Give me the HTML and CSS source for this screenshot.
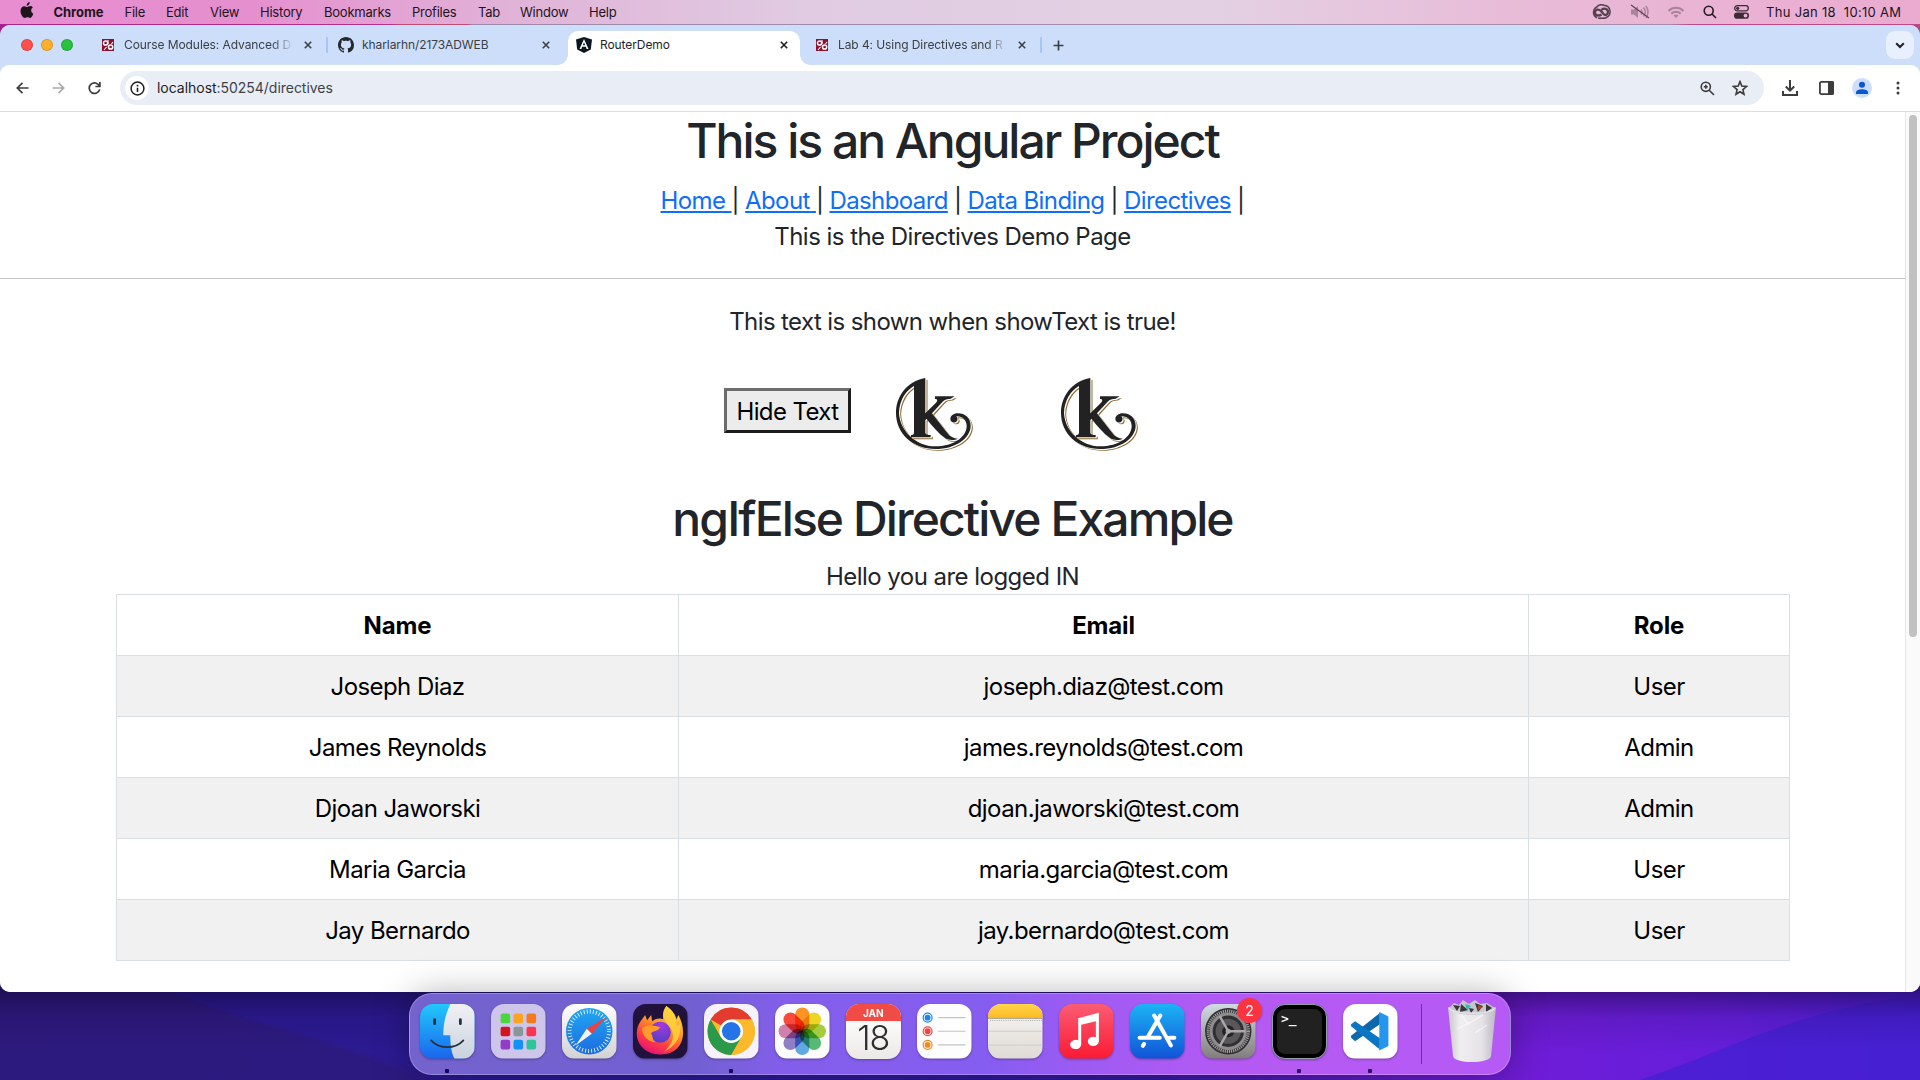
FILE: index.html
```html
<!DOCTYPE html>
<html lang="en">
<head>
<meta charset="utf-8">
<title>RouterDemo</title>
<link rel="stylesheet" href="styles.css">
</head>
<body>
<svg class="defs" aria-hidden="true">
  <defs>
    <g id="klogo">
      <path d="M88 0C32 10 0 55 0 105c0 62 50 108 118 108 62 0 106-34 106-70 0-23-17-37-38-37-14 0-23 8-23 17a11 11 0 0 0 21 4c2-6-1-9-3-12 18-1 31 12 31 29 0 32-38 61-94 61C60 205 12 160 9 105 10 68 29 38 54 24v140c0 5-4 7-9 7v7h59v-7c-9 0-16-2-16-7v-38l4-3c16 20 35 43 56 58 11 7 28 6 38 1-14-1-24-6-32-17l-46-59 32-35c7-7 13-9 24-9l12-7h-59v8c9 0 8 6 3 11l-32 32z"/>
    </g>
    <g id="bbmark">
      <path d="M0 0h12v12H0z" fill="#8d1231"/>
      <circle cx="3.6" cy="4" r="2.1" fill="none" stroke="#fff" stroke-width="1.500"/>
      <circle cx="8.6" cy="8" r="2.1" fill="none" stroke="#fff" stroke-width="1.500"/>
      <path d="M6 1v4M2 11l2.500-3M9.500 5l1.500-2" stroke="#fff" stroke-width="1.100"/>
    </g>
    <linearGradient id="gFinder" x2="0" y2="1"><stop stop-color="#22c8fb"/><stop offset="1" stop-color="#1a66ee"/></linearGradient>
    <linearGradient id="gFace" x2="0" y2="1"><stop stop-color="#f1f1f4"/><stop offset="1" stop-color="#c8d3df"/></linearGradient>
    <linearGradient id="gSafari" x2="0" y2="1"><stop stop-color="#22a7f2"/><stop offset="1" stop-color="#1b6be0"/></linearGradient>
    <linearGradient id="gWhite" x2="0" y2="1"><stop stop-color="#fff"/><stop offset="1" stop-color="#d2d2d4"/></linearGradient>
    <linearGradient id="gFox" x1=".8" y1="0" x2=".3" y2="1"><stop stop-color="#ffe14a"/><stop offset=".45" stop-color="#ff9028"/><stop offset=".75" stop-color="#ff3a42"/><stop offset="1" stop-color="#e0117e"/></linearGradient>
    <radialGradient id="gGlobe" cx=".55" cy=".2" r=".9"><stop stop-color="#a23ae0"/><stop offset="1" stop-color="#4a3fc0"/></radialGradient>
    <linearGradient id="gMusic" x2="0" y2="1"><stop stop-color="#fb5c74"/><stop offset="1" stop-color="#fa1b33"/></linearGradient>
    <linearGradient id="gStore" x2="0" y2="1"><stop stop-color="#1bb4f5"/><stop offset="1" stop-color="#1153d6"/></linearGradient>
    <linearGradient id="gGray" x2="0" y2="1"><stop stop-color="#cfdbe2"/><stop offset="1" stop-color="#827d7c"/></linearGradient>
    <linearGradient id="gNote" x2="0" y2="1"><stop stop-color="#f7f6f4"/><stop offset="1" stop-color="#dfdad5"/></linearGradient>
    <linearGradient id="gYellow" x2="0" y2="1"><stop stop-color="#ffd54a"/><stop offset="1" stop-color="#fdb924"/></linearGradient>
    <linearGradient id="gTrash"><stop stop-color="#c9c6cc"/><stop offset=".25" stop-color="#efeef0"/><stop offset=".7" stop-color="#e6e3e8"/><stop offset="1" stop-color="#bdb8c4"/></linearGradient>
    <linearGradient id="gWall"><stop stop-color="#2e1b83"/><stop offset=".3" stop-color="#2d1a8c"/><stop offset=".6" stop-color="#3c1ba6"/><stop offset=".78" stop-color="#701cd6"/><stop offset=".9" stop-color="#651edb"/><stop offset="1" stop-color="#4d1ed6"/></linearGradient>
    <linearGradient id="gShade" x2="0" y2="1"><stop stop-color="#10042e" stop-opacity=".6"/><stop offset=".5" stop-color="#10042e" stop-opacity=".12"/><stop offset="1" stop-color="#10042e" stop-opacity="0"/></linearGradient>
  </defs>
</svg>

<header class="menubar">
  <svg class="apple" width="14" height="17" viewBox="0 0 14 17"><path fill="#1e141c" d="M9.7 0c.1 1.200-.3 2.100-.9 2.800-.6.7-1.400 1.100-2.200 1.100-.1-1.100.4-2.100.9-2.700C8.100.5 9 .1 9.700 0zM12.900 5.600c-1.200.8-1.700 1.700-1.700 3 0 1.500.8 2.600 2.100 3.100-.4 1.300-1.700 4.200-3.300 4.200-.9 0-1.300-.6-2.500-.6s-1.600.6-2.500.6C3 15.900.5 12.400.5 8.900c0-3.100 1.900-4.700 3.800-4.700 1.200 0 2.100.8 2.900.8.800 0 1.800-.9 3.200-.9 1.100 0 2 .6 2.500 1.500z"/></svg>
  <nav class="menus">
    <b>Chrome</b><span>File</span><span>Edit</span><span>View</span><span>History</span><span>Bookmarks</span><span>Profiles</span><span>Tab</span><span>Window</span><span>Help</span>
  </nav>
  <div class="status">
    <svg width="20" height="16" viewBox="0 0 20 16" fill="none" stroke="#55414d" stroke-width="1.500"><path d="M6 13.800A6 6 0 0 1 5.500 3.200 6.800 6.800 0 0 1 13 1.200a6.500 6.500 0 0 1 2 12.500 8 8 0 0 1-3 .5H7"/><path d="M10.500 10.500C8.500 12 4 12 4 8.500S8 5 10 7l2.500 3c2 2 4.500.5 4.500-2 0-3-4-4.500-6.500-2.200" stroke-width="2.300"/></svg>
    <svg width="20" height="16" viewBox="0 0 20 16" fill="none" stroke="#a88399" stroke-width="1.500"><path d="M1 5.500h3L8 2v12L4 10.500H1z" fill="#a88399" stroke="none"/><path d="M11 5.500q2 2.500 0 5M13.500 3.500q3.500 4.500 0 9M16 2q4 6 0 12"/><path d="M1 1l18 13" stroke="#5c4353" stroke-width="1.200"/></svg>
    <svg width="18" height="13" viewBox="0 0 18 13" fill="none" stroke="#a88399" stroke-width="2"><path d="M1.500 5a10.500 10.500 0 0 1 15 0M4.300 7.800a6.500 6.500 0 0 1 9.400 0"/><path d="M9 12L6.500 9.600a3.600 3.600 0 0 1 5 0z" fill="#a88399" stroke="none"/></svg>
    <svg width="14" height="14" viewBox="0 0 14 14" fill="none" stroke="#231a20" stroke-width="1.600"><circle cx="5.700" cy="5.700" r="4.500"/><path d="M9 9l4 4"/></svg>
    <svg width="15" height="14" viewBox="0 0 15 14"><rect x=".7" y=".7" width="13.600" height="5.200" rx="2.600" fill="none" stroke="#3c2b36" stroke-width="1.300"/><circle cx="3.700" cy="3.300" r="1.600" fill="#3c2b36"/><rect y="7.500" width="15" height="6.300" rx="3.100" fill="#3c2b36"/><circle cx="11.500" cy="10.600" r="1.900" fill="#e8b4d2"/></svg>
    <span class="clock">Thu Jan 18 &nbsp;10:10 AM</span>
  </div>
</header>
<div class="wallline"></div>

<main class="window">
  <div class="tabstrip">
    <div class="lights"><i class="red"></i><i class="amber"></i><i class="green"></i></div>
    <div class="tab first">
      <svg width="16" height="16" viewBox="-2 -2 16 16"><use href="#bbmark"/></svg>
      <span class="label fade">Course Modules: Advanced D</span>
      <svg class="x" width="8" height="8" viewBox="0 0 8 8"><path d="M.8.8l6.400 6.400M7.200.8L.8 7.200"/></svg>
    </div>
    <div class="tab github">
      <svg width="16" height="16" viewBox="0 0 16 16"><path fill="#24292f" d="M8 0C3.580 0 0 3.580 0 8c0 3.540 2.290 6.530 5.470 7.590.4.070.55-.17.55-.38 0-.19-.01-.82-.01-1.490-2.010.37-2.530-.49-2.690-.94-.09-.23-.48-.94-.82-1.130-.28-.15-.68-.52-.01-.53.63-.01 1.080.58 1.230.82.72 1.210 1.870.87 2.330.66.07-.52.28-.87.51-1.070-1.780-.2-3.640-.89-3.640-3.950 0-.87.31-1.590.82-2.150-.08-.2-.36-1.020.08-2.120 0 0 .67-.21 2.200.82.64-.18 1.320-.27 2-.27s1.360.09 2 .27c1.530-1.040 2.200-.82 2.200-.82.44 1.100.16 1.920.08 2.120.51.56.82 1.270.82 2.150 0 3.070-1.870 3.750-3.650 3.950.29.25.54.73.54 1.480 0 1.070-.01 1.930-.01 2.200 0 .21.15.46.55.38A8.010 8.010 0 0 0 16 8c0-4.420-3.580-8-8-8z"/></svg>
      <span class="label">kharlarhn/2173ADWEB</span>
      <svg class="x" width="8" height="8" viewBox="0 0 8 8"><path d="M.8.8l6.400 6.400M7.200.8L.8 7.200"/></svg>
    </div>
    <div class="tab active">
      <svg width="16" height="16" viewBox="0 0 16 16"><path d="M8 0l8 2.600-1.200 10L8 16l-6.800-3.400L0 2.600z" fill="#0d1620"/><path d="M8 2L3.500 12h1.800l.9-2.300h3.600l.9 2.300h1.800zm0 3.400l1.200 2.900H6.800z" fill="#fff"/></svg>
      <span class="label">RouterDemo</span>
      <svg class="x" width="8" height="8" viewBox="0 0 8 8"><path d="M.8.8l6.400 6.400M7.200.8L.8 7.200"/></svg>
    </div>
    <div class="tab lab">
      <svg width="16" height="16" viewBox="-2 -2 16 16"><use href="#bbmark"/></svg>
      <span class="label fade">Lab 4: Using Directives and R</span>
      <svg class="x" width="8" height="8" viewBox="0 0 8 8"><path d="M.8.8l6.400 6.400M7.200.8L.8 7.200"/></svg>
    </div>
    <svg class="plus" width="11" height="11" viewBox="0 0 11 11"><path d="M5.500.5v10M.5 5.500h10"/></svg>
    <div class="tabsearch"><svg width="10" height="7" viewBox="0 0 10 7"><path d="M1.200 1.200L5 5l3.800-3.800"/></svg></div>
  </div>

  <div class="toolbar">
    <div class="navbtns">
      <svg width="13" height="12" viewBox="0 0 13 12"><path d="M6.500.8L1.300 6l5.200 5.200M1.300 6H12.500"/></svg>
      <svg class="dim" width="13" height="12" viewBox="0 0 13 12"><path d="M6.500.8L11.700 6l-5.200 5.200M11.700 6H.5"/></svg>
      <svg width="13" height="14" viewBox="0 0 13 14"><path d="M11.400 5A5.300 5.300 0 1 0 11.700 8.400M11.900 1v4.500H7.400"/></svg>
    </div>
    <div class="omnibox">
      <div class="info"><svg width="15" height="15" viewBox="0 0 15 15"><circle cx="7.500" cy="7.500" r="6.400" fill="none" stroke="#1f1f1f" stroke-width="1.500"/><path d="M7.500 6.700v4.200M7.500 3.800v1.700" stroke="#1f1f1f" stroke-width="1.600"/></svg></div>
      <span class="url"><span class="host">localhost</span>:50254/directives</span>
      <svg class="mag" width="15" height="15" viewBox="0 0 15 15"><circle cx="5.800" cy="5.800" r="4.600"/><path d="M9.200 9.200l4.800 4.800M5.800 3.800v4M3.800 5.800h4"/></svg>
      <svg class="star" width="16" height="16" viewBox="0 0 16 16"><path d="M8 1.600l1.800 4.500 4.700.4-3.600 3.100 1.100 4.700L8 11.800l-4 2.500 1.100-4.700L1.500 6.500l4.700-.4z"/></svg>
    </div>
    <div class="actions">
      <svg width="16" height="16" viewBox="0 0 16 16"><path d="M8 0v10M3.800 6.500L8 10.600l4.200-4.100M1 11v4h14v-4" stroke-width="2"/></svg>
      <svg width="15" height="14" viewBox="0 0 15 14"><rect x=".9" y=".9" width="13.200" height="12.200" rx="1.500" stroke-width="1.800"/><path d="M9 0h4q2 0 2 2v10q0 2-2 2H9z" fill="#3c3c3c" stroke="none"/></svg>
      <svg width="20" height="20" viewBox="0 0 20 20"><circle cx="10" cy="10" r="10" fill="#cbdefc" stroke="none"/><circle cx="10" cy="6.800" r="3" fill="#0b57d0" stroke="none"/><path d="M4 16v-1.500C4 12 8 11.300 10 11.300s6 .7 6 3.200V16z" fill="#0b57d0" stroke="none"/></svg>
      <svg width="4" height="14" viewBox="0 0 4 14" class="dots"><circle cx="2" cy="2" r="1.500"/><circle cx="2" cy="7" r="1.500"/><circle cx="2" cy="12" r="1.500"/></svg>
    </div>
  </div>

  <div class="viewport">
    <div class="page">
      <h2 class="title">This is an Angular Project</h2>
      <nav class="links"><a>Home </a>| <a>About </a>| <a>Dashboard</a> | <a>Data Binding</a> | <a>Directives</a> |</nav>
      <p class="demo">This is the Directives Demo Page</p>
      <hr>
      <p class="shown">This text is shown when showText is true!</p>
      <div class="buttons">
        <button>Hide Text</button>
        <svg class="logo" width="77" height="73" viewBox="0 0 231 219"><use href="#klogo" x="6.500" y="5.500" fill="#8f6c33"/><use href="#klogo" x="3.500" y="3" fill="#fff"/><use href="#klogo" fill="#222"/></svg>
        <svg class="logo" width="77" height="73" viewBox="0 0 231 219"><use href="#klogo" x="6.500" y="5.500" fill="#8f6c33"/><use href="#klogo" x="3.500" y="3" fill="#fff"/><use href="#klogo" fill="#222"/></svg>
      </div>
      <h2 class="example">ngIfElse Directive Example</h2>
      <p class="hello">Hello you are logged IN</p>
      <table>
        <colgroup><col class="c1"><col class="c2"><col class="c3"></colgroup>
        <thead><tr><th>Name</th><th>Email</th><th>Role</th></tr></thead>
        <tbody>
          <tr><td>Joseph Diaz</td><td>joseph.diaz@test.com</td><td>User</td></tr>
          <tr><td>James Reynolds</td><td>james.reynolds@test.com</td><td>Admin</td></tr>
          <tr><td>Djoan Jaworski</td><td>djoan.jaworski@test.com</td><td>Admin</td></tr>
          <tr><td>Maria Garcia</td><td>maria.garcia@test.com</td><td>User</td></tr>
          <tr><td>Jay Bernardo</td><td>jay.bernardo@test.com</td><td>User</td></tr>
        </tbody>
      </table>
    </div>
    <div class="scrollbar"><div class="thumb"></div></div>
  </div>
</main>

<footer class="desk">
  <svg class="wall" width="1920" height="98" viewBox="0 -10 1920 98" preserveAspectRatio="none">
    <path d="M0-10h1920V88H0z" fill="url(#gWall)"/>
    <path d="M170 0C260 35 350 50 440 88H1180C1000 20 800 0 600-10H150z" fill="#2a1aa0" opacity=".45"/>
    <path d="M0 0H170C260 35 350 55 420 88H0z" fill="#2d1a7c" opacity=".6"/>
    <path d="M1640 88C1720 62 1800 15 1920 4v84z" fill="#451fd2" opacity=".8"/>
    <path d="M0-10h1920V60H0z" fill="url(#gShade)"/>
  </svg>
  <div class="dock">
    <svg class="app on" viewBox="0 0 54 54"><path fill="url(#gFinder)" d="M0 0h54v54H0z"/><path fill="url(#gFace)" d="M30 0C25 11 23 20 23 31h7c0 9 1 17 4 23h20V0z"/><path d="M14.500 15.500v4M40 15.500v4" stroke="#26313d" stroke-width="2.800" stroke-linecap="round"/><path d="M11 36c8 9 24 9 32 0" fill="none" stroke="#26313d" stroke-width="1.700" stroke-linecap="round"/></svg>
    <svg class="app" viewBox="0 0 54 54"><path fill="#cdc5ea" d="M0 0h54v54H0z"/><g><rect x="9.500" y="9.500" width="9.500" height="9.500" rx="2" fill="#48d83c"/><rect x="22.300" y="9.500" width="9.500" height="9.500" rx="2" fill="#fba51f"/><rect x="35.200" y="9.500" width="9.500" height="9.500" rx="2" fill="#f37a1f"/><rect x="9.500" y="22.500" width="9.500" height="9.500" rx="2" fill="#d3151c"/><rect x="22.300" y="22.500" width="9.500" height="9.500" rx="2" fill="#8b9699"/><rect x="35.200" y="22.500" width="9.500" height="9.500" rx="2" fill="#fb3450"/><rect x="9.500" y="35.500" width="9.500" height="9.500" rx="2" fill="#933cc8"/><rect x="22.300" y="35.500" width="9.500" height="9.500" rx="2" fill="#1391f5"/><rect x="35.200" y="35.500" width="9.500" height="9.500" rx="2" fill="#2fc497"/></g></svg>
    <svg class="app" viewBox="0 0 54 54"><path fill="url(#gWhite)" d="M0 0h54v54H0z"/><circle cx="27" cy="27" r="23" fill="url(#gSafari)"/><circle cx="27" cy="27" r="19.500" fill="none" stroke="#e6f3fd" stroke-width="4" stroke-dasharray=".9 2.163"/><path d="M44 13L24.500 24.500l5 5z" fill="#f0423c"/><path d="M13.500 41l11-16.500 5 5z" fill="#f3f3f3"/></svg>
    <svg class="app" viewBox="0 0 54 54"><path fill="#20123a" d="M0 0h54v54H0z"/><path d="M33 2c7 5 9 9 10 13l2-4c9 16 6 39-18 39C11 50 2 38 4 26c1-6 3-8 8-15l2 5 4-5 1 6c4-3 8-3 11-2-1-5 0-9 3-13z" fill="url(#gFox)"/><circle cx="27" cy="28" r="10.500" fill="url(#gGlobe)"/><path d="M9 24c5-4 12-3 18-1-3 5-7 3-9 6 2 4 1 7 5 9C13 37 9 31 9 24z" fill="#ff9a2c"/><path d="M33 2c8 6 10 12 10 20l4-2c1 15-7 23-16 27 13-12 9-22 3-27-4-5-5-11-1-18z" fill="#ffd53c" opacity=".8"/></svg>
    <svg class="app on" viewBox="0 0 54 54"><path fill="#f5f2fb" d="M0 0h54v54H0z"/><circle cx="27" cy="27" r="23.500" fill="#fdb92c"/><path d="M27 27L6.600 15.300A23.500 23.500 0 0 1 47.400 15.300H27z" fill="#e33b2e"/><path d="M6.600 15.300A23.500 23.500 0 0 0 27 50.500L37.200 33 27 27 16.800 33z" fill="#2b994a"/><path d="M27 15.300h20.400A23.500 23.500 0 0 1 27 50.500L37.200 33z" fill="#fdb92c"/><circle cx="27" cy="27" r="11.700" fill="#fff"/><circle cx="27" cy="27" r="9.200" fill="#2474e8"/></svg>
    <svg class="app" viewBox="0 0 54 54"><path fill="#fcfcfd" d="M0 0h54v54H0z"/><g class="petals"><rect x="20" y="3.500" width="14" height="24" rx="7" fill="#fb9424"/><rect x="20" y="3.500" width="14" height="24" rx="7" fill="#ecd524" transform="rotate(45 27 27)"/><rect x="20" y="3.500" width="14" height="24" rx="7" fill="#a5cc3e" transform="rotate(90 27 27)"/><rect x="20" y="3.500" width="14" height="24" rx="7" fill="#57b974" transform="rotate(135 27 27)"/><rect x="20" y="3.500" width="14" height="24" rx="7" fill="#5fa8e2" transform="rotate(180 27 27)"/><rect x="20" y="3.500" width="14" height="24" rx="7" fill="#8f7fc6" transform="rotate(225 27 27)"/><rect x="20" y="3.500" width="14" height="24" rx="7" fill="#d07fae" transform="rotate(270 27 27)"/><rect x="20" y="3.500" width="14" height="24" rx="7" fill="#f8493c" transform="rotate(315 27 27)"/></g></svg>
    <div class="app cal"><span class="month">JAN</span><span class="day">18</span></div>
    <svg class="app" viewBox="0 0 54 54"><path fill="#fdfdfd" d="M0 0h54v54H0z"/><path d="M21 13.500h27M21 27h27M21 40.500h27" stroke="#c4c4c6" stroke-width="1"/><g fill="none" stroke-width="1.200"><circle cx="10.500" cy="13.500" r="4.400" stroke="#1a84fb"/><circle cx="10.500" cy="27" r="4.400" stroke="#f8403c"/><circle cx="10.500" cy="40.500" r="4.400" stroke="#f28a1e"/></g><circle cx="10.500" cy="13.500" r="2.900" fill="#1a84fb"/><circle cx="10.500" cy="27" r="2.900" fill="#f8403c"/><circle cx="10.500" cy="40.500" r="2.900" fill="#f28a1e"/></svg>
    <svg class="app" viewBox="0 0 54 54"><path fill="url(#gNote)" d="M0 0h54v54H0z"/><path fill="url(#gYellow)" d="M0 0h54v14H0z"/><path d="M0 14.300h54" stroke="#9a958c" stroke-width=".8"/><path d="M2 16.300h52" stroke="#b5b2ac" stroke-width="1" stroke-dasharray="1 1.200"/><path d="M0 27h54M0 40.700h54" stroke="#c9c6c1" stroke-width=".8"/></svg>
    <svg class="app" viewBox="0 0 54 54"><path fill="url(#gMusic)" d="M0 0h54v54H0z"/><path d="M19 14l20.500-5.300v28.500a5.500 4.600 0 1 1-3-4.300V17L22 20.500V40a5.500 4.600 0 1 1-3-4z" fill="#fff"/></svg>
    <svg class="app" viewBox="0 0 54 54"><path fill="url(#gStore)" d="M0 0h54v54H0z"/><g stroke="#fff" stroke-width="4" stroke-linecap="round"><path d="M30 11.500L17.500 33M24 11.500L40.500 41M9.500 33.500h20M39 33.500h5M14 39.500l-1.300 2"/></g></svg>
    <div class="app settings"><svg viewBox="0 0 54 54"><path fill="url(#gGray)" d="M0 0h54v54H0z"/><circle cx="27" cy="27" r="23" fill="#302f32"/><circle cx="27" cy="27" r="20" fill="none" stroke="#a09e9f" stroke-width="3" stroke-dasharray="1.200 .9"/><circle cx="27" cy="27" r="17" fill="none" stroke="#8e8c8d" stroke-width="3"/><circle cx="27" cy="27" r="12.500" fill="#59575a"/><circle cx="27" cy="27" r="6" fill="#242326"/><path d="M27 27h17M27 27l-8.500-15M27 27l-8.500 15" stroke="#aaa8a9" stroke-width="2.400"/><circle cx="27" cy="27" r="2.500" fill="#aaa8a9"/></svg><span class="badge">2</span></div>
    <div class="app term on"><span>&gt;_</span></div>
    <svg class="app on" viewBox="0 0 54 54"><path fill="#fff" d="M0 0h54v54H0z"/><path d="M36.500 9v11L12 37l-4-3.500v-2z" fill="#0d68ad"/><path d="M36.500 45V34L12 17l-4 3v2z" fill="#0b76c4"/><path d="M36 8l9 4.300v29.400L36 46z" fill="#2596ec"/></svg>
    <div class="divider"></div>
    <svg class="trash" width="50" height="64" viewBox="0 0 50 64"><path d="M1 8h48l-5 49c-1 8-37 8-38 0z" fill="url(#gTrash)"/><path d="M2 9l5-5 5 2 4-5 6 4 6-4 5 4 7-1 8 5c-2 9-44 9-46 0z" fill="#c3c6cc"/><path d="M6 6l7 1-3 5zM14 5l7 6-8 2zM28 4l8 3-5 6zM39 5l6 4-6 4zM22 9l5 1-3 4z" fill="#39363c"/><path d="M18 5l6 2-4 4z" fill="#2fb9a8"/><path d="M31 6l5 2-5 3z" fill="#a4482e"/><path d="M2 9c4 7 42 7 46 0M15 17l6 8 15-9M10 30l12-6M28 34l12-8" fill="none" stroke="#fff" stroke-width="1.400" opacity=".55"/></svg>
  </div>
</footer>
</body>
</html>
```
FILE: styles.css
```css
* { box-sizing: border-box; }

body {
  margin: 0;
  width: 1920px;
  height: 1080px;
  overflow: hidden;
  display: flex;
  flex-direction: column;
  font-family: Inter, "Liberation Sans", sans-serif;
  background: linear-gradient(90deg, #a2208f, #b44a86 30%, #a07a9c 50%, #b8467f);
}

.defs { position: absolute; width: 0; height: 0; }

p, h2 { margin: 0; }

/* menu bar */
.menubar {
  flex: none;
  height: 24px;
  display: flex;
  align-items: center;
  padding: 0 18px 0 20px;
  font-size: 13px;
  color: #1e141c;
  background: linear-gradient(90deg, #e78dd0 0, #e58fce 250px, #e0b4d8 520px, #e0cbe2 800px, #e3d1e3 1200px, #e8bcd8 1500px, #ebaad0 1920px);
}
.apple { margin-top: -3px; }
.menus {
  margin-left: 19.5px;
  margin-top: -1px;
  display: grid;
  grid-template-columns: 71px 41.500px 44px 50px 64px 88px 66px 42px 69px 40px;
  letter-spacing: -0.23px;
}
.menus b { letter-spacing: -0.05px; }
.status { margin-left: auto; display: flex; align-items: center; }
.status svg:nth-child(2) { margin-left: 19.5px; }
.status svg:nth-child(3) { margin-left: 17px; }
.status svg:nth-child(4) { margin-left: 18px; }
.status svg:nth-child(5) { margin-left: 17px; }
.clock { margin: -1px 0 0 17px; width: 136px; white-space: nowrap; letter-spacing: 0.31px; }
.wallline {
  flex: none;
  height: 1px;
  background: linear-gradient(90deg, #a8248c 0, #b3308c 390px, #c24d74 400px, #c24d74 468px, #9c8aab 472px, #a98fab 1670px, #bd4a86 1690px);
}

/* browser window */
.window {
  flex: none;
  height: 967px;
  display: flex;
  flex-direction: column;
  border-radius: 10px;
  overflow: hidden;
  background: #cddefb;
}
.tabstrip {
  flex: none;
  height: 40px;
  display: flex;
  align-items: center;
  background: #cddefb;
}
.lights { width: 93px; padding-left: 21px; display: flex; gap: 8px; }
.lights i { width: 12px; height: 12px; border-radius: 50%; border: 0.5px solid rgba(0, 0, 0, .15); }
.red { background: #fe4f4b; }
.amber { background: #feb02c; }
.green { background: #29c23f; }

.tab {
  height: 34px;
  margin-top: 6px;
  padding-bottom: 6px;
  display: flex;
  align-items: center;
  font-size: 12px;
  letter-spacing: -0.08px;
  color: #3c4043;
}
.tab .label { margin-left: 8px; margin-top: -2px; white-space: nowrap; }
.tab .fade {
  width: 170px;
  -webkit-mask-image: linear-gradient(90deg, #000 148px, transparent 170px);
  mask-image: linear-gradient(90deg, #000 148px, transparent 170px);
}
.tab .x { margin-left: auto; stroke: #3c4043; stroke-width: 1.6; fill: none; }
.first, .lab { position: relative; }
.first { width: 234px; padding-left: 7px; padding-right: 15px; }
.github { width: 241px; padding-left: 11px; padding-right: 18px; }
.lab { width: 241px; padding-left: 14px; padding-right: 15px; }
.first::after, .lab::after {
  content: "";
  position: absolute;
  right: -1px;
  top: 6px;
  width: 2px;
  height: 16px;
  border-radius: 1px;
  background: #a3c5f8;
}
.active {
  position: relative;
  width: 232px;
  padding-left: 8px;
  padding-right: 12px;
  border-radius: 10px 10px 0 0;
  background: #fff;
  color: #1f1f1f;
}
.active .x { stroke: #1f1f1f; }
.active::before, .active::after {
  content: "";
  position: absolute;
  bottom: 0;
  width: 10px;
  height: 10px;
}
.active::before { left: -10px; background: radial-gradient(circle at 0 0, transparent 9.500px, #fff 10px); }
.active::after { right: -10px; background: radial-gradient(circle at 100% 0, transparent 9.500px, #fff 10px); }
.plus { margin-left: 11.5px; stroke: #3c4043; stroke-width: 1.7; }
.tabsearch {
  margin-left: auto;
  margin-right: 6px;
  width: 28px;
  height: 28px;
  border-radius: 9px;
  background: #e8f0fe;
  display: grid;
  place-items: center;
}
.tabsearch svg { fill: none; stroke: #1f1f1f; stroke-width: 2; }

/* toolbar */
.toolbar {
  flex: none;
  height: 47px;
  padding-left: 15.5px;
  padding-right: 20px;
  display: flex;
  align-items: center;
  background: #fff;
  border-bottom: 1px solid #dcdde0;
  border-radius: 9px 9px 0 0;
}
.navbtns { display: flex; align-items: center; gap: 23px; width: 104.5px; }
.navbtns svg { fill: none; stroke: #3c3c3c; stroke-width: 1.7; }
.navbtns .dim { stroke: #a9a9a9; }
.omnibox {
  width: 1644px;
  height: 34px;
  padding-left: 5px;
  padding-right: 16px;
  border-radius: 17px;
  background: #e9edf6;
  display: flex;
  align-items: center;
}
.info { width: 24px; height: 24px; border-radius: 50%; background: #fff; display: grid; place-items: center; }
.url { margin-left: 8px; margin-top: -1px; font-size: 14px; color: #3f4247; letter-spacing: -0.03px; }
.host { color: #1f1f1f; }
.omnibox > svg { fill: none; stroke: #3c3c3c; stroke-width: 1.6; }
.mag { margin-left: auto; }
.star { margin-left: 17px; }
.actions { margin-left: 18px; display: flex; align-items: center; }
.actions svg { fill: none; stroke: #3c3c3c; }
.actions svg:nth-child(2) { margin-left: 20.5px; }
.actions svg:nth-child(3) { margin-left: 18.5px; }
.actions .dots { margin-left: 24px; fill: #3c3c3c; stroke: none; }

/* page */
.viewport { flex: 1; display: flex; background: #fff; min-height: 0; }
.page {
  flex: 1;
  text-align: center;
  font-size: 24px;
  line-height: 36px;
  letter-spacing: -0.53px;
  color: #212529;
}
.page h2 { font-size: 48px; font-weight: 530; line-height: 57.6px; }
.page .title { letter-spacing: -2px; margin-bottom: 13px; }
.page .example { letter-spacing: -1.9px; margin-bottom: 12px; padding-top: 0.4px; }
.links { letter-spacing: -0.6px; }
.links a { color: #0d6efd; text-decoration: underline; white-space: pre-wrap; }
.shown { letter-spacing: -0.6px; }
.hello { margin-bottom: -1.4px; }
hr { margin: 23px 0 25px; border: 0; border-top: 1px solid #c5c6c8; }
.buttons { display: flex; align-items: center; height: 73px; margin: 38px 0 38.8px 724px; }
button {
  width: 127px;
  height: 45px;
  margin-top: -8px;
  padding: 3px 0 0;
  border: 3px solid;
  border-color: #6c6c6c #1c1c1c #1c1c1c #6c6c6c;
  background: #ececec;
  font: 24px/36px Inter, "Liberation Sans", sans-serif;
  letter-spacing: -0.6px;
  color: #000;
}
.logo { margin-left: 45px; }
.logo + .logo { margin-left: 88px; }
table {
  margin-left: 116px;
  width: 1674px;
  table-layout: fixed;
  border-collapse: collapse;
  color: #000;
}
.c1 { width: 562px; }
.c2 { width: 850px; }
.c3 { width: 261px; }
th, td { border: 1px solid #dadfe3; padding: 13px 0 11px; height: 61px; text-align: center; letter-spacing: -0.57px; }
th { font-weight: 700; letter-spacing: -0.15px; }
tbody tr:nth-child(odd) { background: #f1f1f1; }

.scrollbar { width: 15px; padding: 3px 3px 0; border-left: 1px solid #e6e6e6; background: #fafafa; }
.thumb { width: 8px; height: 522px; border-radius: 4px; background: #c1c1c1; }

/* dock */
.desk { position: relative; flex: none; height: 88px; display: flex; }
.wall { position: absolute; left: 0; top: -10px; z-index: -1; }
.dock {
  margin-left: 409px;
  margin-top: 1px;
  width: 1102px;
  height: 82px;
  padding: 10px 0 0 10px;
  display: flex;
  gap: 16.5px;
  border-radius: 23px;
  border: 1px solid rgba(255, 255, 255, .25);
  background: linear-gradient(90deg, #7462cd 0, #7260d2 26%, #835eea 34%, #855df0 52%, #9f5bf3 62%, #b45af3 75%, #b65af5 100%);
  box-shadow: 0 3px 36px rgba(0, 0, 0, .34);
}
.app {
  position: relative;
  flex: none;
  width: 54.5px;
  height: 54.5px;
  border-radius: 13px;
  filter: drop-shadow(0 1px 1px rgba(0, 0, 0, .3));
}
.app svg, svg.app { border-radius: 13px; display: block; }
.petals rect { mix-blend-mode: multiply; }
.petals { isolation: isolate; }
.cal {
  overflow: hidden;
  display: flex;
  flex-direction: column;
  align-items: center;
  background: linear-gradient(#f9f9f8 40%, #ebe9e6);
}
.month { width: 100%; height: 17px; text-align: center; font-size: 10px; line-height: 19px; font-weight: 700; letter-spacing: 0; color: #fff; background: #f04b44; }
.day { font-size: 34px; line-height: 34px; font-weight: 300; letter-spacing: -1px; color: #2e2e2e; }
.badge {
  position: absolute;
  left: 36px;
  top: -6px;
  width: 25px;
  height: 25px;
  border-radius: 50%;
  background: #fb3440;
  color: #fff;
  font-size: 14px;
  line-height: 25px;
  text-align: center;
}
.term {
  border: 1.5px solid #8fa0aa;
  background: #212121;
  box-shadow: inset 0 0 0 4px #000;
  color: #f5f5f5;
  font: bold 13px/14px "DejaVu Sans Mono", monospace;
  padding: 7px 0 0 8px;
}
.divider { flex: none; width: 1px; height: 60px; margin: 0 9.500px 0 6.500px; background: #7a20b8; }
.trash { flex: none; margin-top: -5px; margin-left: -1px; }

/* running-app markers under the dock icons */
.desk::before {
  content: "";
  position: absolute;
  z-index: 1;
  left: 445px;
  top: 77px;
  width: 4px;
  height: 4px;
  border-radius: 1px;
  background: #180058;
  box-shadow: 284px 0 #180058, 852px 0 #2c0560, 923px 0 #2c0560;
}
```
